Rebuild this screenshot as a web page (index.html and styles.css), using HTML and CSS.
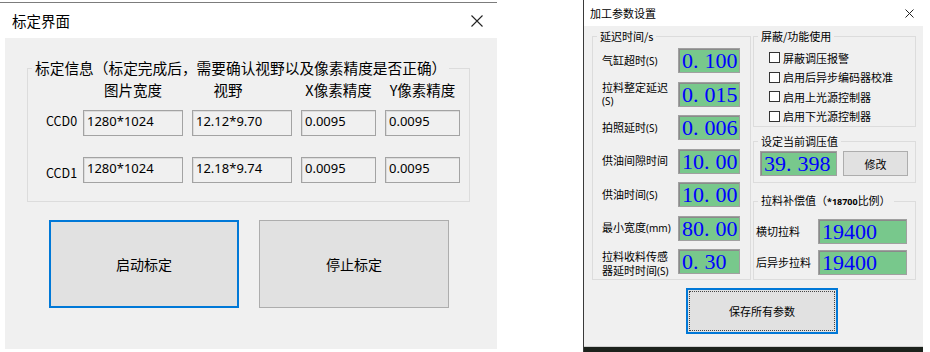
FILE: index.html
```html
<!DOCTYPE html>
<html lang="zh-CN">
<head>
    <meta charset="UTF-8">
    <title>标定界面 / 加工参数设置</title>
    <link rel="stylesheet" href="styles.css">
</head>
<body>
    <div class="screen">
        <!-- 标定界面 -->
        <div class="win win-calib">
            <div class="titlebar">
                <span class="title">标定界面</span>
                <svg class="close" width="12" height="12" viewBox="0 0 12 12"><path d="M0.5 0.5 L11.5 11.5 M11.5 0.5 L0.5 11.5" stroke="#222" stroke-width="1.1" fill="none"/></svg>
            </div>
            <div class="client">
                <fieldset class="group info">
                    <legend>标定信息（标定完成后，需要确认视野以及像素精度是否正确）</legend>
                    <div class="info-row head">
                        <span></span>
                        <span>图片宽度</span>
                        <span class="fov">视野</span>
                        <span>X像素精度</span>
                        <span>Y像素精度</span>
                    </div>
                    <div class="info-row first">
                        <span class="ccd up">CCD0</span>
                        <div class="cell">1280*1024</div>
                        <div class="cell">12.12*9.70</div>
                        <div class="cell">0.0095</div>
                        <div class="cell">0.0095</div>
                    </div>
                    <div class="info-row">
                        <span class="ccd down">CCD1</span>
                        <div class="cell">1280*1024</div>
                        <div class="cell">12.18*9.74</div>
                        <div class="cell">0.0095</div>
                        <div class="cell">0.0095</div>
                    </div>
                </fieldset>
                <div class="actions">
                    <button class="btn btn-big focused">启动标定</button>
                    <button class="btn btn-big">停止标定</button>
                </div>
            </div>
        </div>

        <!-- 加工参数设置 -->
        <div class="win win-params">
            <div class="titlebar small">
                <span class="title">加工参数设置</span>
                <svg class="close" width="9" height="9" viewBox="0 0 9 9"><path d="M0.5 0.5 L8.5 8.5 M8.5 0.5 L0.5 8.5" stroke="#222" stroke-width="1" fill="none"/></svg>
            </div>
            <div class="client params">
                <div class="params-body">
                    <fieldset class="group delay">
                        <legend>延迟时间/s</legend>
                        <div class="delay-grid">
                            <span class="lbl">气缸超时<small>(S)</small></span>
                            <div class="lcd">0<span class="dot">.</span>100</div>
                            <span class="lbl">拉料整定延迟<br><small>(S)</small></span>
                            <div class="lcd">0<span class="dot">.</span>015</div>
                            <span class="lbl">拍照延时<small>(S)</small></span>
                            <div class="lcd">0<span class="dot">.</span>006</div>
                            <span class="lbl">供油间隙时间</span>
                            <div class="lcd">10<span class="dot">.</span>00</div>
                            <span class="lbl">供油时间<small>(S)</small></span>
                            <div class="lcd">10<span class="dot">.</span>00</div>
                            <span class="lbl">最小宽度<small>(mm)</small></span>
                            <div class="lcd">80<span class="dot">.</span>00</div>
                            <span class="lbl two">拉料收料传感<br>器延时时间<small>(S)</small></span>
                            <div class="lcd">0<span class="dot">.</span>30</div>
                        </div>
                    </fieldset>

                    <div class="side">
                        <fieldset class="group mask">
                            <legend>屏蔽/功能使用</legend>
                            <label class="check"><span class="box"></span>屏蔽调压报警</label>
                            <label class="check"><span class="box"></span>启用后异步编码器校准</label>
                            <label class="check"><span class="box"></span>启用上光源控制器</label>
                            <label class="check"><span class="box"></span>启用下光源控制器</label>
                        </fieldset>

                        <fieldset class="group pressure">
                            <legend>设定当前调压值</legend>
                            <div class="lcd wide">39<span class="dot">.</span>398</div>
                            <button class="btn btn-edit">修改</button>
                        </fieldset>

                        <fieldset class="group comp">
                            <legend>拉料补偿值（<b>*18700</b>比例）</legend>
                            <div class="comp-grid">
                                <span class="lbl">横切拉料</span>
                                <div class="lcd">19400</div>
                                <span class="lbl">后异步拉料</span>
                                <div class="lcd">19400</div>
                            </div>
                        </fieldset>
                    </div>
                </div>
                <button class="btn btn-save">保存所有参数</button>
            </div>
            <div class="desktop"></div>
        </div>
    </div>
</body>
</html>
```

FILE: styles.css
```css
/* Base */
* {
    margin: 0;
    padding: 0;
    box-sizing: border-box;
}

body {
    background-color: #fff;
    color: #000;
    font-family: "Noto Sans CJK SC", "Noto Sans", sans-serif;
    overflow: hidden;
}

.screen {
    display: flex;
    align-items: flex-start;
    width: 930px;
    height: 352px;
}

/* Windows */
.win {
    background-color: #fff;
}

.titlebar {
    display: flex;
    align-items: center;
    justify-content: space-between;
}

.client {
    background-color: #f0f0f0;
}

fieldset.group {
    border: 1px solid #dcdcdc;
    min-width: 0;
}

fieldset.group legend {
    padding: 0 3px;
}

.btn {
    font-family: "Noto Sans CJK SC", "Noto Sans", sans-serif;
    background-color: #e1e1e1;
    border: 1px solid #adadad;
    color: #000;
}

/* Calibration window */
.win-calib {
    width: 497px;
    margin-top: 2px;
    border-top: 1px solid #7c7c7c;
}

.win-calib .titlebar {
    height: 35px;
    padding: 0 14px 0 12px;
}

.win-calib .title {
    font-size: 14.5px;
}

.win-calib .client {
    margin-left: 5px;
    height: 311px;
    padding-top: 21px;
}

.info {
    margin-left: 22px;
    width: 443px;
    padding: 4px 0 18px 18px;
}

.info legend {
    font-size: 14.7px;
    line-height: 18px;
    margin-left: -14px;
}

.info-row {
    display: grid;
    grid-template-columns: 28px 100px 100px 75px 75px;
    column-gap: 9px;
    height: 26px;
}

.info-row.head {
    height: 18px;
    margin-bottom: 11px;
    font-size: 14.5px;
    line-height: 18px;
    text-align: center;
}

.info-row.head .fov {
    padding-right: 28px;
}

.info-row.first {
    margin-bottom: 21px;
}

.ccd {
    font-size: 12.5px;
    line-height: 16px;
    align-self: center;
}

.ccd.up {
    margin-top: -5px;
}

.ccd.down {
    margin-top: 5px;
}

.cell {
    border: 1px solid #a3a3a3;
    box-shadow: inset 1px 1px 0 #dcdcdc;
    font-family: "Noto Sans", sans-serif;
    font-size: 13px;
    line-height: 18px;
    padding: 1px 0 0 3px;
}

.actions {
    display: flex;
    gap: 20px;
    margin: 18px 0 0 44px;
}

.btn-big {
    width: 190px;
    height: 88px;
    font-size: 14px;
}

.btn-big.focused {
    border: 2px solid #0078d7;
}

/* Parameter window */
.win-params {
    width: 340px;
    margin-left: 86px;
    border-left: 1px solid #3a3a3a;
}

.titlebar.small {
    height: 26px;
    padding: 0 9px 0 6px;
}

.win-params .title {
    font-size: 11px;
}

.client.params {
    height: 320px;
    padding: 3px 0 0 8px;
    font-size: 11px;
}

.params-body {
    display: flex;
    gap: 2px;
}

.win-params legend {
    font-size: 11px;
    line-height: 14px;
}

.win-params small {
    font-family: "Noto Sans", sans-serif;
    font-size: 10px;
    line-height: 1;
}

.delay {
    width: 159px;
    padding: 5px 10px 3px 9px;
}

.delay legend {
    margin-left: -5px;
}

.delay-grid {
    display: grid;
    grid-template-columns: 76px 62px;
    grid-auto-rows: 25px;
    row-gap: 8.5px;
    align-items: center;
}

.lbl {
    line-height: 13.5px;
}

.lbl.two {
    line-height: 14px;
    margin-top: 2px;
}

.lcd {
    height: 25px;
    background-color: #78c88c;
    border: 1px solid #a0a0a0;
    box-shadow: inset 1px 1px 0 #8a8a8a;
    color: #0000ff;
    font-family: "Liberation Serif", serif;
    font-size: 22px;
    line-height: 23px;
    padding-left: 3px;
    white-space: nowrap;
}

.lcd .dot {
    margin-right: 6px;
}

.side {
    width: 163px;
    display: flex;
    flex-direction: column;
}

.mask {
    padding: 5px 0 0 15px;
}

.mask legend {
    margin-left: -11px;
}

.check {
    display: flex;
    align-items: center;
    gap: 3px;
    height: 19.5px;
}

.check .box {
    width: 11px;
    height: 11px;
    border: 1px solid #333;
    background-color: #fff;
}

.pressure {
    margin-top: 7px;
    padding: 3px 0 6px 6px;
    display: flex;
    gap: 6px;
}

.pressure legend {
    margin-left: -2px;
}

.lcd.wide {
    width: 77px;
}

.btn-edit {
    width: 65px;
    height: 25px;
    font-size: 11px;
}

.comp {
    margin-top: 10px;
    padding: 10px 0 4px 2px;
}

.comp legend {
    margin-left: 2px;
}

.comp legend b {
    font-family: "Noto Sans", sans-serif;
    font-size: 9px;
}

.comp-grid {
    display: grid;
    grid-template-columns: 62px 89px;
    grid-auto-rows: 25px;
    row-gap: 6px;
    align-items: center;
}

.btn-save {
    display: block;
    width: 152px;
    height: 46px;
    margin: 8px 0 0 94px;
    font-size: 11px;
    border: 2px solid #0078d7;
    outline: 1px dotted #444;
    outline-offset: -4px;
}

.desktop {
    height: 6px;
    border-top: 1px solid #cfcfcf;
    background-color: #1c221c;
}
```
